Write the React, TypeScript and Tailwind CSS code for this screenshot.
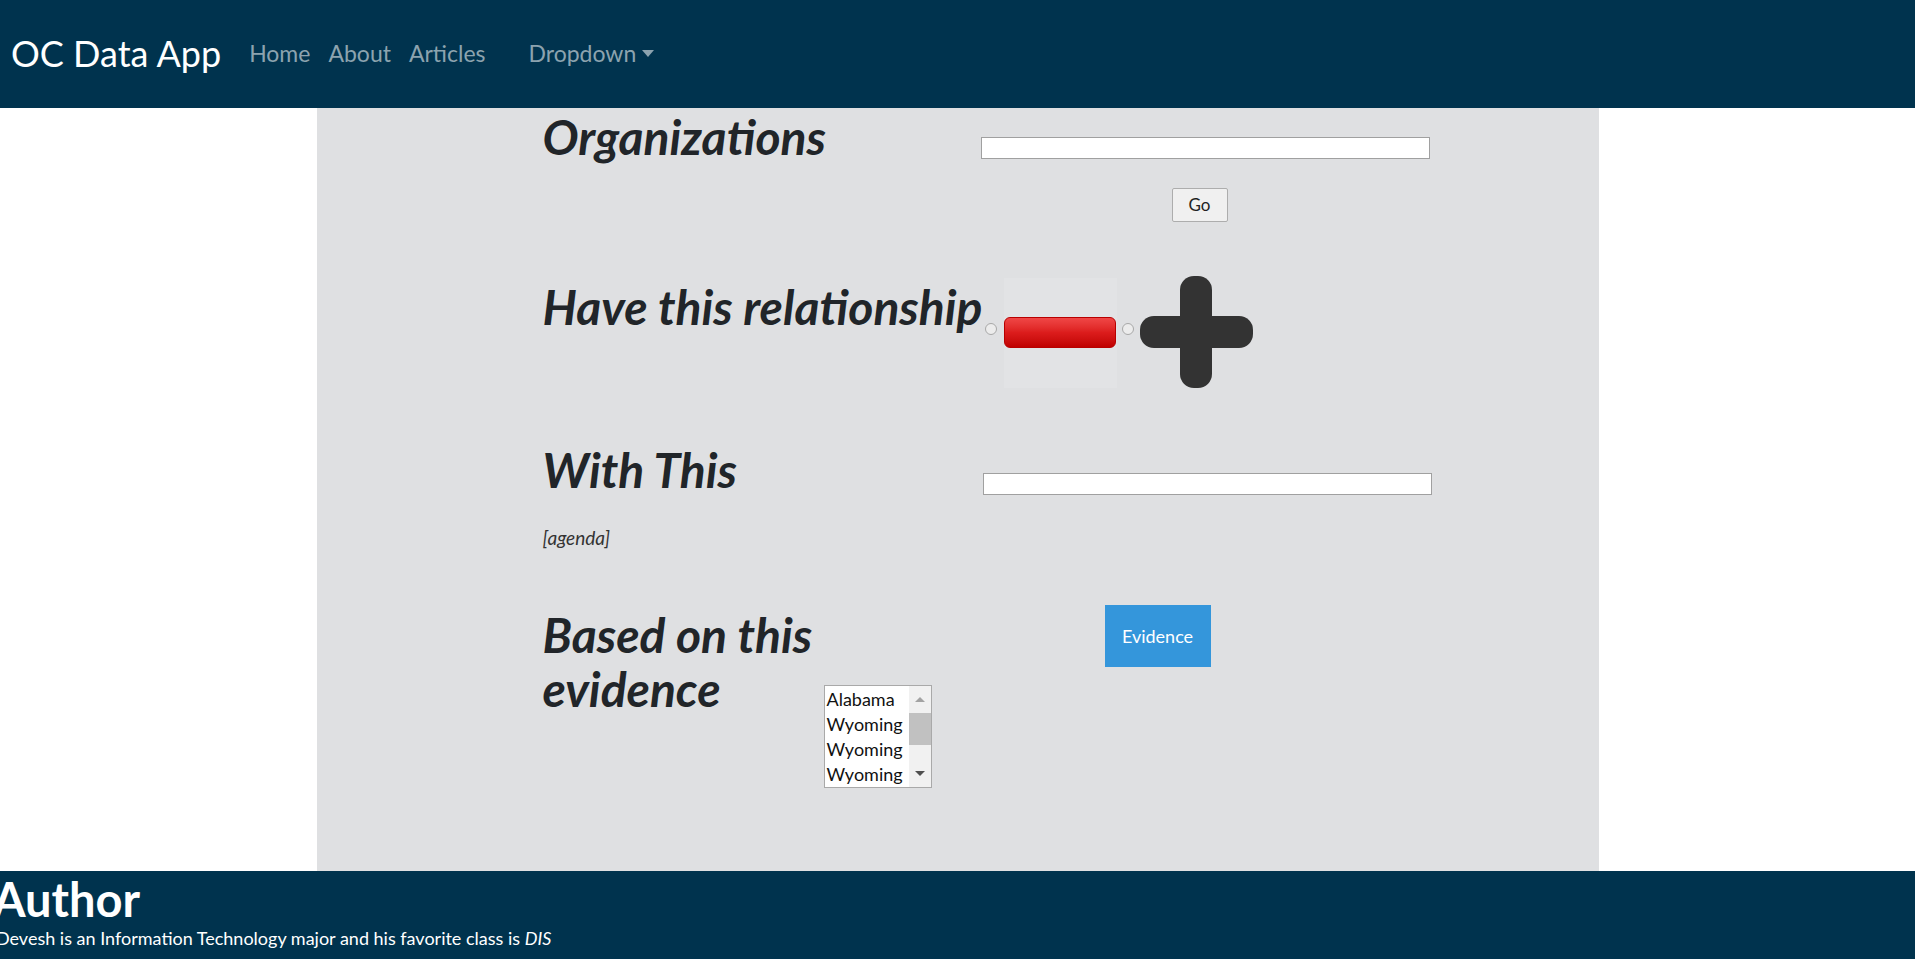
import React from 'react';

const font = { fontFamily: 'Lato, "Open Sans", sans-serif' };

const Radio: React.FC<{ className?: string }> = ({ className = '' }) => (
  <span
    className={`block w-[12px] h-[12px] rounded-full border border-[#a8a8a8] bg-[#ececec] ${className}`}
  />
);

const MinusImage: React.FC = () => (
  <div className="w-[113px] h-[110px] bg-[#e2e3e5] flex items-center mt-[2px]">
    <div className="mt-[-1px] w-[112px] h-[31px] rounded-[6px] border border-[#b80000] bg-gradient-to-b from-[#f04646] via-[#dc1c1c] to-[#c00000]" />
  </div>
);

const PlusImage: React.FC = () => (
  <svg width="113" height="112" viewBox="0 0 113 112" className="block">
    <rect x="40" y="0" width="32" height="112" rx="14" fill="#333333" />
    <rect x="0" y="40" width="113" height="32" rx="14" fill="#333333" />
  </svg>
);

const ListBox: React.FC = () => {
  const items = ['Alabama', 'Wyoming', 'Wyoming', 'Wyoming'];
  return (
    <div className="w-[108px] h-[103px] border border-[#a9a9a9] bg-white flex">
      <ul className="flex-1 pl-[2px] pt-[1px] overflow-hidden">
        {items.map((it, i) => (
          <li key={i} className="h-[25px] leading-[25px] text-[18px] text-[#111]">
            {it}
          </li>
        ))}
      </ul>
      <div className="w-[22px] bg-[#f1f1f1] flex flex-col items-center">
        <span className="mt-[11px] w-0 h-0 border-x-[5px] border-x-transparent border-b-[5px] border-b-[#a3a3a3]" />
        <span className="mt-[11px] w-[22px] h-[32px] bg-[#c1c1c1]" />
        <span className="mt-auto mb-[11px] w-0 h-0 border-x-[5px] border-x-transparent border-t-[5px] border-t-[#505050]" />
      </div>
    </div>
  );
};

const Heading: React.FC<{ children: React.ReactNode; className?: string }> = ({ children, className = '' }) => (
  <h1 className={`text-[48px] leading-[54px] font-bold italic text-[#212529] ${className}`}>{children}</h1>
);

export default function App() {
  return (
    <div className="min-h-screen flex flex-col bg-white" style={font}>
      <nav className="h-[108px] bg-[#00334e] flex items-center pl-[11px]">
        <a href="#" className="text-white text-[36px] leading-none mt-[-3px]">
          OC Data App
        </a>
        <ul className="flex items-center ml-[28px] text-[23px] text-[#8ca3af] mt-[-2px]">
          <li className="mr-[18px]">Home</li>
          <li className="mr-[18px]">About</li>
          <li>Articles</li>
          <li className="ml-[43px] flex items-center">
            Dropdown
            <span className="ml-[6px] w-0 h-0 border-x-[6px] border-x-transparent border-t-[7px] border-t-[#8ca3af]" />
          </li>
        </ul>
      </nav>

      <main className="mx-auto w-[1282px] h-[763px] bg-[#dfe0e2] pl-[226px]">
        {/* Organizations */}
        <div className="flex">
          <Heading className="w-[438px] mt-[2px]">Organizations</Heading>
          <div className="w-[449px] flex flex-col">
            <input type="text" className="mt-[29px] h-[22px] w-[449px] bg-white border border-[#a0a0a0] outline-none" />
            <button className="mt-[29px] ml-[191px] w-[56px] h-[34px] bg-[#f0f0f0] border border-[#adadad] rounded-[2px] text-[17px] text-[#222]">
              Go
            </button>
          </div>
        </div>

        {/* relationship */}
        <div className="flex items-start mt-[54px]">
          <Heading className="w-[442px] mt-[4px] whitespace-nowrap">Have this relationship</Heading>
          <Radio className="mt-[47px]" />
          <div className="ml-[7px]">
            <MinusImage />
          </div>
          <Radio className="ml-[5px] mt-[47px]" />
          <div className="ml-[6px]">
            <PlusImage />
          </div>
        </div>

        {/* With This */}
        <div className="flex items-start mt-[53px]">
          <Heading className="w-[440px] mt-[2px]">With This</Heading>
          <input type="text" className="mt-[32px] h-[22px] w-[449px] bg-white border border-[#a0a0a0] outline-none" />
        </div>
        <p className="mt-[28px] text-[19px] leading-[26px] italic text-[#333]">[agenda]</p>

        {/* evidence */}
        <div className="flex items-start mt-[55px]">
          <Heading className="w-[281px] whitespace-nowrap mt-[2px]">
            Based on this
            <br />
            evidence
          </Heading>
          <div className="w-[281px] pt-[79px]">
            <ListBox />
          </div>
          <button className="mt-[-1px] w-[106px] h-[62px] bg-[#3496db] text-white text-[18px]">Evidence</button>
        </div>
      </main>

      <footer className="h-[88px] bg-[#00334e] text-white pt-[2px]">
        <h2 className="text-[47px] leading-[52px] font-bold ml-[-7px]">Author</h2>
        <p className="text-[18px] leading-[24px] mt-[1px] ml-[-4px]">
          Devesh is an Information Technology major and his favorite class is <em>DIS</em>
        </p>
      </footer>
    </div>
  );
}
